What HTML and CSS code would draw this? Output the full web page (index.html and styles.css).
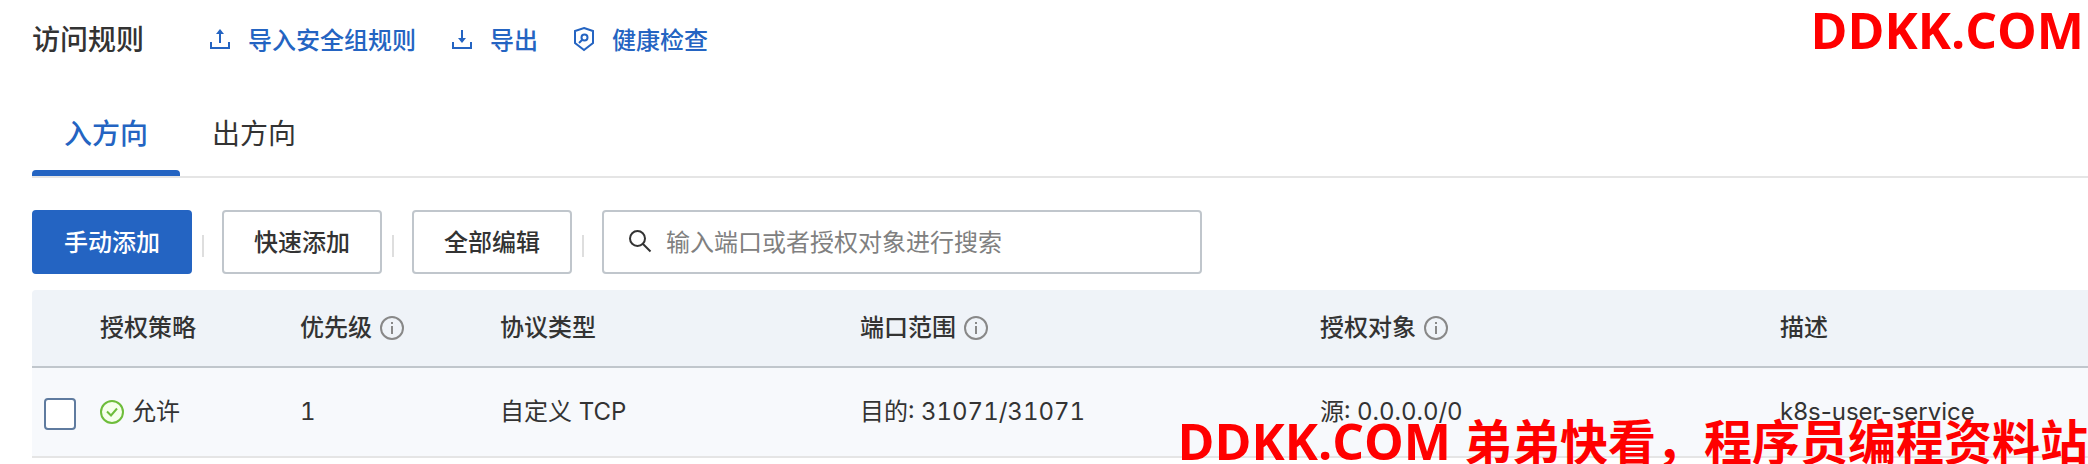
FILE: index.html
```html
<!DOCTYPE html>
<html lang="zh-CN">
<head>
  <meta charset="UTF-8" />
  <meta name="viewport" content="width=device-width, initial-scale=1.0" />
  <title>访问规则</title>
  <link rel="stylesheet" href="styles.css">
</head>
<body>

  <main class="panel">
    <header class="panel-header">
      <h1>访问规则</h1>
      <nav class="actions">
        <a href="#import">
          <svg class="icon" viewBox="0 0 24 24"><path d="M3 13v6h18v-6M12 14V4" /><path class="solid" d="M12 0l4 5H8z" /></svg>
          导入安全组规则
        </a>
        <a href="#export">
          <svg class="icon" viewBox="0 0 24 24"><path d="M3 13v6h18v-6M12 1v10" /><path class="solid" d="M12 14l4-5H8z" /></svg>
          导出
        </a>
        <a href="#health">
          <svg class="icon" viewBox="0 0 24 24"><path d="M12 -1l9 3v12l-9 7-9-7V2z" /><circle cx="12.500" cy="8.500" r="3" /><path d="M10 11l-3 3" /></svg>
          健康检查
        </a>
      </nav>
    </header>

    <div class="tabs" role="tablist">
      <button class="tab active" role="tab" aria-selected="true">入方向</button>
      <button class="tab" role="tab" aria-selected="false">出方向</button>
    </div>

    <div class="toolbar">
      <button class="btn primary">手动添加</button>
      <span class="divider"></span>
      <button class="btn">快速添加</button>
      <span class="divider"></span>
      <button class="btn">全部编辑</button>
      <span class="divider"></span>
      <label class="search">
        <svg class="icon" viewBox="0 0 24 24"><circle cx="9.500" cy="8.500" r="7.500" /><path d="M15 14l7.500 7.500" /></svg>
        <input type="search" aria-label="搜索" placeholder="输入端口或者授权对象进行搜索">
      </label>
    </div>

    <table class="rules">
      <colgroup>
        <col class="col-check">
        <col class="col-short">
        <col class="col-short">
        <col class="col-protocol">
        <col class="col-wide">
        <col class="col-wide">
        <col>
      </colgroup>
      <thead>
        <tr>
          <th></th>
          <th>授权策略</th>
          <th>
            <div class="cell">优先级 <svg class="icon info" viewBox="0 0 24 24"><circle cx="12" cy="12" r="11" /><path d="M12 10v8M12 6v2" /></svg></div>
          </th>
          <th>协议类型</th>
          <th>
            <div class="cell">端口范围 <svg class="icon info" viewBox="0 0 24 24"><circle cx="12" cy="12" r="11" /><path d="M12 10v8M12 6v2" /></svg></div>
          </th>
          <th>
            <div class="cell">授权对象 <svg class="icon info" viewBox="0 0 24 24"><circle cx="12" cy="12" r="11" /><path d="M12 10v8M12 6v2" /></svg></div>
          </th>
          <th>描述</th>
        </tr>
      </thead>
      <tbody>
        <tr>
          <td class="check"><input type="checkbox" aria-label="选择规则"></td>
          <td>
            <div class="cell"><svg class="icon allow" viewBox="0 0 24 24"><circle cx="12" cy="12" r="11" /><path d="M7 11.500l4 4 6-7" /></svg> 允许</div>
          </td>
          <td class="num">1</td>
          <td>自定义 TCP</td>
          <td class="num">目的: 31071/31071</td>
          <td class="num">源: 0.0.0.0/0</td>
          <td>k8s-user-service</td>
        </tr>
      </tbody>
    </table>
  </main>

  <div class="watermark top">DDKK.COM</div>
  <div class="watermark bottom">DDKK.COM <span>弟弟快看，程序员编程资料站</span></div>

</body>
</html>
```
FILE: styles.css
```css
html {
  overflow: hidden;
}
body {
  margin: 0;
  position: relative;
  overflow: hidden;
  background: #fff;
  color: #333;
  font-family: Inter, "Noto Sans CJK SC", sans-serif;
  font-size: 24px;
  line-height: 32px;
}
button, input {
  font: inherit;
  color: inherit;
}
.panel {
  padding: 20px 0 6px 32px;
}
.icon {
  width: 24px;
  height: 24px;
  flex: none;
  overflow: visible;
  fill: none;
  stroke: currentColor;
  stroke-width: 2;
}
.icon .solid {
  fill: currentColor;
  stroke: none;
}

/* header */
.panel-header {
  display: flex;
  align-items: center;
  gap: 64px;
  height: 40px;
}
h1 {
  margin: 0;
  font-size: 28px;
  line-height: 40px;
  font-weight: 500;
}
.actions {
  display: flex;
  gap: 34px;
  padding-top: 2px;
}
.actions a {
  display: flex;
  align-items: center;
  gap: 16px;
  color: #2464c2;
  font-weight: 500;
  text-decoration: none;
}

/* tabs */
.tabs {
  display: flex;
  margin-top: 32px;
  border-bottom: 2px solid #e5e5e5;
}
.tab {
  position: relative;
  height: 84px;
  padding: 0 32px;
  border: 0;
  background: none;
  font-size: 28px;
  line-height: 40px;
}
.tab.active {
  color: #2464c2;
  font-weight: 500;
}
.tab.active::after {
  content: "";
  position: absolute;
  left: 0;
  right: 0;
  bottom: 0;
  height: 6px;
  border-radius: 4px 4px 0 0;
  background: #2464c2;
}

/* toolbar */
.toolbar {
  display: flex;
  align-items: center;
  margin: 32px 0 16px;
}
.btn {
  box-sizing: border-box;
  height: 64px;
  padding: 2px 30px 0;
  border: 2px solid #c0c6cc;
  border-radius: 4px;
  background: #fff;
  font-weight: 500;
}
.btn.primary {
  border-color: #2464c2;
  background: #2464c2;
  color: #fff;
}
.divider {
  width: 2px;
  height: 22px;
  margin: 8px 18px 0 10px;
  background: #dedede;
}
.search {
  box-sizing: border-box;
  display: flex;
  align-items: center;
  gap: 14px;
  width: 600px;
  height: 64px;
  padding: 0 24px;
  border: 2px solid #c0c6cc;
  border-radius: 4px;
}
.search input {
  flex: 1;
  min-width: 0;
  padding: 2px 0 0;
  border: 0;
  outline: 0;
  background: none;
}
.search input::placeholder {
  color: #808080;
}

/* rules table */
.rules {
  width: 100%;
  table-layout: fixed;
  border-collapse: separate;
  border-spacing: 0;
}
.col-check { width: 52px; }
.col-short { width: 200px; }
.col-protocol { width: 360px; }
.col-wide { width: 460px; }
.rules th {
  height: 76px;
  padding: 0 16px;
  border-bottom: 2px solid #c0c6cc;
  background: #eff3f8;
  font-weight: 500;
  text-align: left;
}
.rules th:first-child {
  border-top-left-radius: 4px;
}
.rules td {
  height: 88px;
  padding: 0 16px;
  border-bottom: 2px solid #e5e5e5;
  background: #f7f9fc;
  white-space: nowrap;
}
.rules td.check {
  padding: 0 0 0 12px;
}
.num {
  font-variant-numeric: tabular-nums;
}
.cell {
  display: flex;
  align-items: center;
  gap: 8px;
}
.info {
  color: #888;
}
.allow {
  color: #6ebd3b;
}
.allow circle {
  fill: #f6ffec;
}
input[type="checkbox"] {
  appearance: none;
  display: block;
  box-sizing: border-box;
  width: 32px;
  height: 32px;
  margin: 4px 0 0;
  border: 2px solid #5f7b9f;
  border-radius: 4px;
  background: #fff;
}

/* watermark */
.watermark {
  position: absolute;
  right: 0;
  color: #f00;
  font-family: "Open Sans", "Noto Sans CJK SC", sans-serif;
  font-size: 50px;
  font-weight: 700;
  line-height: 60px;
  white-space: nowrap;
}
.watermark span {
  font-size: 48px;
}
.watermark.top {
  top: 0;
  right: 4px;
}
.watermark.bottom {
  bottom: -8px;
}
```
